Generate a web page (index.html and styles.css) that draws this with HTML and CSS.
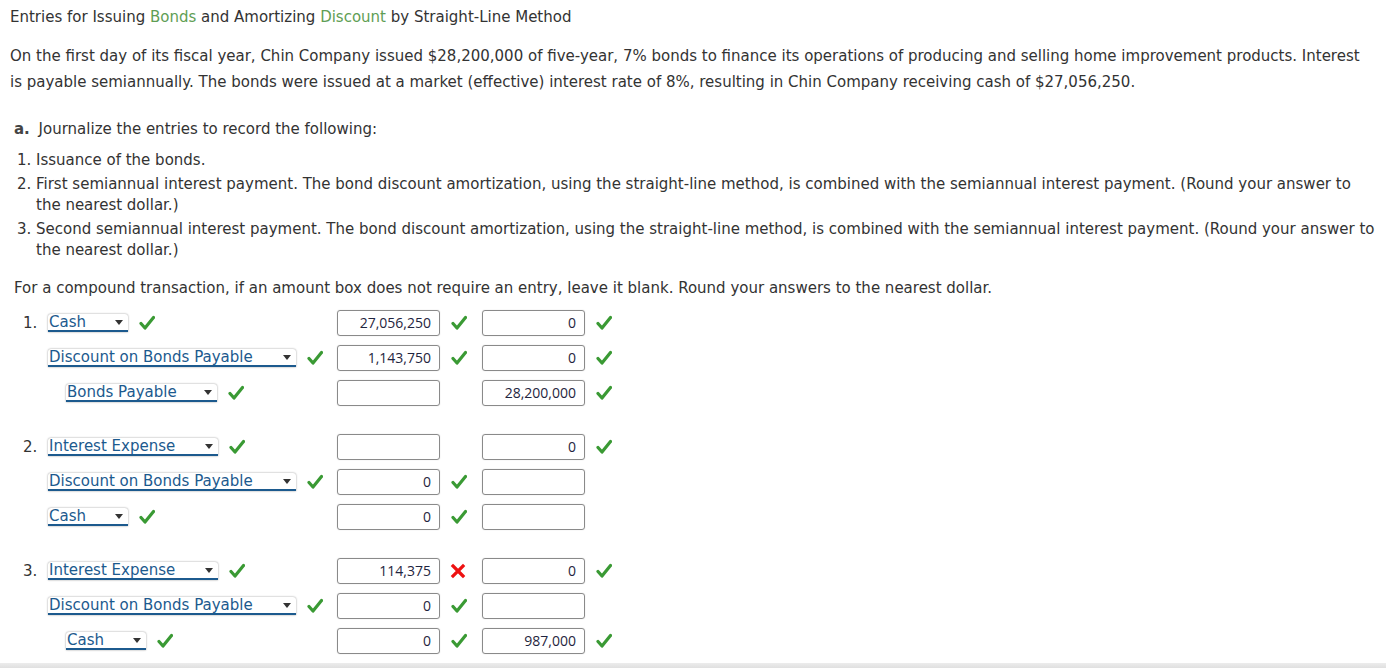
FILE: index.html
```html
<!DOCTYPE html>
<html>
<head>
<meta charset="utf-8">
<link rel="stylesheet" href="styles.css">
</head>
<body>
<div class="page">
  <p class="title">Entries for Issuing <span class="term">Bonds</span> and Amortizing <span class="term">Discount</span> by Straight-Line Method</p>
  <p class="intro">On the first day of its fiscal year, Chin Company issued $28,200,000 of five-year, 7% bonds to finance its operations of producing and selling home improvement products. Interest is payable semiannually. The bonds were issued at a market (effective) interest rate of 8%, resulting in Chin Company receiving cash of $27,056,250.</p>

  <div class="part">
    <p class="part-head"><b>a.</b> Journalize the entries to record the following:</p>
    <ol class="tasks">
      <li>Issuance of the bonds.</li>
      <li>First semiannual interest payment. The bond discount amortization, using the straight-line method, is combined with the semiannual interest payment. (Round your answer to the nearest dollar.)</li>
      <li>Second semiannual interest payment. The bond discount amortization, using the straight-line method, is combined with the semiannual interest payment. (Round your answer to the nearest dollar.)</li>
    </ol>
    <p class="note">For a compound transaction, if an amount box does not require an entry, leave it blank. Round your answers to the nearest dollar.</p>

    <div class="journal">
      <div class="entry">
        <div class="jrow">
          <div class="acct"><span class="num">1.</span><span class="sel w-cash">Cash<i class="arrow"></i></span><span class="ok"></span></div>
          <div class="amt"><span class="box">27,056,250</span><span class="ok"></span></div>
          <div class="amt"><span class="box">0</span><span class="ok"></span></div>
        </div>
        <div class="jrow">
          <div class="acct"><span class="num"></span><span class="sel w-disc">Discount on Bonds Payable<i class="arrow"></i></span><span class="ok"></span></div>
          <div class="amt"><span class="box">1,143,750</span><span class="ok"></span></div>
          <div class="amt"><span class="box">0</span><span class="ok"></span></div>
        </div>
        <div class="jrow">
          <div class="acct"><span class="num"></span><span class="sel w-bp indent">Bonds Payable<i class="arrow"></i></span><span class="ok"></span></div>
          <div class="amt"><span class="box"></span></div>
          <div class="amt"><span class="box">28,200,000</span><span class="ok"></span></div>
        </div>
      </div>

      <div class="entry">
        <div class="jrow">
          <div class="acct"><span class="num">2.</span><span class="sel w-int">Interest Expense<i class="arrow"></i></span><span class="ok"></span></div>
          <div class="amt"><span class="box"></span></div>
          <div class="amt"><span class="box">0</span><span class="ok"></span></div>
        </div>
        <div class="jrow">
          <div class="acct"><span class="num"></span><span class="sel w-disc">Discount on Bonds Payable<i class="arrow"></i></span><span class="ok"></span></div>
          <div class="amt"><span class="box">0</span><span class="ok"></span></div>
          <div class="amt"><span class="box"></span></div>
        </div>
        <div class="jrow">
          <div class="acct"><span class="num"></span><span class="sel w-cash">Cash<i class="arrow"></i></span><span class="ok"></span></div>
          <div class="amt"><span class="box">0</span><span class="ok"></span></div>
          <div class="amt"><span class="box"></span></div>
        </div>
      </div>

      <div class="entry">
        <div class="jrow">
          <div class="acct"><span class="num">3.</span><span class="sel w-int">Interest Expense<i class="arrow"></i></span><span class="ok"></span></div>
          <div class="amt"><span class="box">114,375</span><span class="bad"></span></div>
          <div class="amt"><span class="box">0</span><span class="ok"></span></div>
        </div>
        <div class="jrow">
          <div class="acct"><span class="num"></span><span class="sel w-disc">Discount on Bonds Payable<i class="arrow"></i></span><span class="ok"></span></div>
          <div class="amt"><span class="box">0</span><span class="ok"></span></div>
          <div class="amt"><span class="box"></span></div>
        </div>
        <div class="jrow">
          <div class="acct"><span class="num"></span><span class="sel w-cash indent">Cash<i class="arrow"></i></span><span class="ok"></span></div>
          <div class="amt"><span class="box">0</span><span class="ok"></span></div>
          <div class="amt"><span class="box">987,000</span><span class="ok"></span></div>
        </div>
      </div>
    </div>
  </div>
</div>
<div class="bottom-bar"></div>
</body>
</html>
```

FILE: styles.css
```css
html, body {
  margin: 0;
  padding: 0;
  background: #fff;
}
body {
  font-family: "DejaVu Sans", Verdana, sans-serif;
  font-size: 15px;
  color: #333;
  overflow: hidden;
}
.page {
  padding: 0 10px;
  height: 663px;
}
p { margin: 0; }
.title {
  padding-top: 7px;
  line-height: 20px;
}
.term { color: #5f9e55; }
.intro {
  margin-top: 16px;
  line-height: 26px;
}
.part { padding-left: 4px; }
.part-head {
  margin-top: 24px;
  line-height: 20px;
}
.part-head b { color: #444; margin-right: 4px; }
.tasks {
  margin: 11px 0 0 0;
  padding-left: 22px;
  line-height: 21.5px;
}
.tasks li { margin-bottom: 2px; }
.note {
  margin-top: 16px;
  line-height: 20px;
}
.journal {
  margin-top: 8px;
  margin-left: -14px;
}
.entry { margin-bottom: 19px; }
.entry:last-child { margin-bottom: 0; }
.jrow {
  display: grid;
  grid-template-columns: 337px 145px 160px;
  height: 35px;
  align-items: center;
}
.acct {
  display: flex;
  align-items: center;
  padding-left: 23px;
}
.num {
  width: 25px;
  flex: none;
  color: #333;
}
.sel {
  position: relative;
  display: inline-block;
  box-sizing: border-box;
  height: 18px;
  line-height: 17px;
  padding-left: 1px;
  color: #1c5a8e;
  background: #fff;
  border-radius: 3px 3px 0 0;
  box-shadow: 0 0 2px rgba(0,0,0,0.45);
  border-bottom: 2px solid #1c5a8e;
  white-space: nowrap;
}
.sel.indent { margin-left: 18px; }
.w-cash { width: 80px; }
.w-disc { width: 248px; }
.w-bp { width: 151px; }
.w-int { width: 170px; }
.arrow {
  position: absolute;
  right: 5px;
  top: 6px;
  width: 0;
  height: 0;
  border-left: 4px solid transparent;
  border-right: 4px solid transparent;
  border-top: 5px solid #333;
}
.ok, .bad {
  display: inline-block;
  width: 16px;
  height: 16px;
  margin-left: 11px;
  background-repeat: no-repeat;
  background-position: center;
}
.ok {
  background-image: url("data:image/svg+xml;utf8,<svg xmlns='http://www.w3.org/2000/svg' width='16' height='16' viewBox='0 0 16 16'><path d='M2 8.5 L6 13 L14.5 2.5' fill='none' stroke='%233a9a34' stroke-width='3.2' stroke-linecap='round' stroke-linejoin='round'/></svg>");
}
.bad {
  background-image: url("data:image/svg+xml;utf8,<svg xmlns='http://www.w3.org/2000/svg' width='16' height='16' viewBox='0 0 16 16'><path d='M3 3 L13 13 M13 3 L3 13' fill='none' stroke='%23ee1111' stroke-width='3.2' stroke-linecap='square'/></svg>");
}
.amt {
  display: flex;
  align-items: center;
}
.box {
  display: inline-block;
  box-sizing: border-box;
  width: 103px;
  height: 26px;
  border: 1px solid #8a8a8a;
  border-radius: 3px;
  box-shadow: 0 0 1px rgba(0,0,0,0.25);
  text-align: right;
  padding-right: 8px;
  font-family: "Open Sans", "Noto Sans", sans-serif;
  font-size: 14px;
  line-height: 24px;
  color: #1f2540;
}
.amt .ok { margin-left: 11px; }
.amt .bad { margin-left: 10px; }
.bottom-bar {
  height: 5px;
  background: linear-gradient(#ececec, #e0e0e0);
}
```
